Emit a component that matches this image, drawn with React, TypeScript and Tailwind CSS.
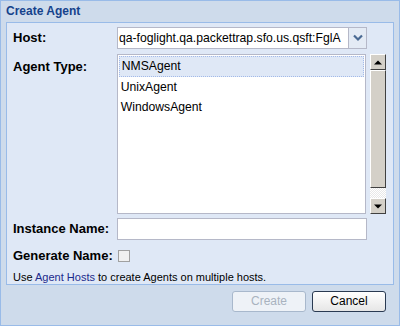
import React from "react";

export default function App() {
  const font = { fontFamily: "Tahoma, 'Liberation Sans', Arial, sans-serif" };
  return (
    <div className="w-[400px] h-[326px] bg-[#cedbeb] border border-[#99bbe8] flex flex-col" style={font}>
      <div className="h-[21px] pl-[5px] pt-[3px] text-[12px] font-bold text-[#15428b] leading-[14px]">Create Agent</div>
      <div className="mx-[5px] h-[263px] bg-[#dfe8f6] border border-[#99bbe8] flex flex-col pl-[6px] pr-[7px]">
        <div className="flex items-center h-[22px] mt-[4px]">
          <div className="w-[104px] text-[13px] font-bold text-black">Host:</div>
          <div className="flex h-[22px] w-[250px] border border-[#b5b8c8] bg-white">
            <div className="flex-1 text-[12.2px] leading-[20px] pl-[1px] text-black overflow-hidden whitespace-nowrap">qa-foglight.qa.packettrap.sfo.us.qsft:FglA</div>
            <div className="w-[18px] bg-[#e4ebf5] border-l border-[#b5b8c8] flex items-center justify-center">
              <svg width="10" height="8" viewBox="0 0 10 8"><path d="M1 1.5 L5 5.5 L9 1.5" stroke="#4a6a93" strokeWidth="2.2" fill="none" /></svg>
            </div>
          </div>
        </div>
        <div className="flex mt-[5px]">
          <div className="w-[104px] text-[13px] font-bold text-black pt-[3px]">Agent Type:</div>
          <div className="w-[250px] h-[160px] border border-[#b5b8c8] bg-white flex flex-col pt-[1px]">
            <div className="h-[21px] mx-[1px] bg-[#dfe8f6] border border-dotted border-[#a3bae9] text-[12.2px] leading-[19px] pl-[2px]">NMSAgent</div>
            <div className="h-[20px] text-[12.2px] leading-[20px] pl-[3px]">UnixAgent</div>
            <div className="h-[20px] text-[12.2px] leading-[20px] pl-[3px]">WindowsAgent</div>
          </div>
          <div className="w-[16px] h-[160px] ml-[4px] flex flex-col bg-[repeating-conic-gradient(#e8e8e8_0%_25%,#ffffff_0%_50%)] bg-[length:2px_2px]">
            <div className="h-[16px] bg-[#d4d0c8] border-t border-l border-white border-r border-b border-r-[#404040] border-b-[#404040] flex items-center justify-center">
              <svg width="8" height="5" viewBox="0 0 8 5"><path d="M0 4.5 L4 0.5 L8 4.5 Z" fill="#000" /></svg>
            </div>
            <div className="h-[118px] bg-[#d4d0c8] border-t border-l border-white border-r border-b border-r-[#404040] border-b-[#404040]" />
            <div className="flex-1" />
            <div className="h-[16px] bg-[#d4d0c8] border-t border-l border-white border-r border-b border-r-[#404040] border-b-[#404040] flex items-center justify-center">
              <svg width="8" height="5" viewBox="0 0 8 5"><path d="M0 0.5 L4 4.5 L8 0.5 Z" fill="#000" /></svg>
            </div>
          </div>
        </div>
        <div className="flex items-center mt-[4px]">
          <div className="w-[104px] text-[13px] font-bold text-black">Instance Name:</div>
          <div className="w-[250px] h-[22px] border border-[#b5b8c8] bg-white" />
        </div>
        <div className="flex items-center mt-[6px] h-[20px]">
          <div className="w-[105px] text-[13px] font-bold text-black">Generate Name:</div>
          <div className="w-[12px] h-[12px] border border-[#a0a0a0] bg-[#f0f0f0]" />
        </div>
        <div className="text-[11px] text-black mt-[4px] leading-[14px]">
          Use <span className="text-[#1c2a8c]">Agent Hosts</span> to create Agents on multiple hosts.
        </div>
      </div>
      <div className="flex justify-end gap-[6px] pr-[13px] mt-[6px]">
        <div className="w-[74px] h-[21px] border border-[#a8b8cc] rounded-[3px] bg-[#eef2f7] text-[12px] leading-[19px] text-center text-[#a9b3bf]">Create</div>
        <div className="w-[74px] h-[21px] border border-[#2a3a52] rounded-[3px] bg-[linear-gradient(#ffffff,#e6e6e6)] text-[12px] leading-[19px] text-center text-black">Cancel</div>
      </div>
    </div>
  );
}
